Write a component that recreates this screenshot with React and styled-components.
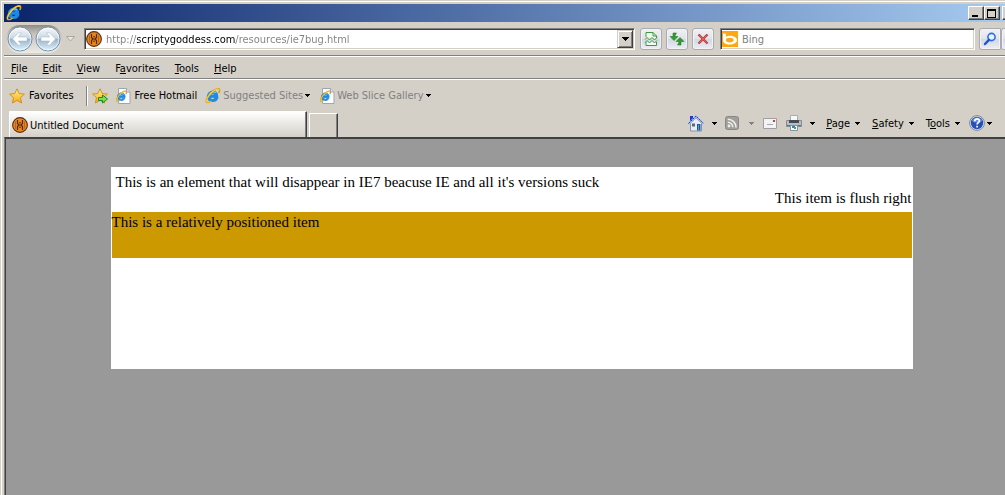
import React from 'react'
import styled, { createGlobalStyle } from 'styled-components'

const GlobalStyle = createGlobalStyle`
    * {
        box-sizing: border-box;
    }
    html, body, #root {
        height: 100%;
        margin: 0;
    }
    body {
        overflow: hidden;
        background: #d4d0c8;
    }
    button, input, a {
        font: 11px "DejaVu Sans Condensed", "Noto Sans", sans-serif;
        color: black;
    }
    button {
        border: none;
        background: none;
        padding: 0;
    }
    svg {
        display: block;
        flex: none;
    }
`;

const Window = styled.div`
    display: flex;
    flex-direction: column;
    min-height: 100%;
    padding: 2px 0 0 2px;
    border-top: 1px solid #d4d0c8;
    border-left: 1px solid #d4d0c8;
    box-shadow: inset 1px 1px white;
    background: #d4d0c8;
    font: 11px "DejaVu Sans Condensed", "Noto Sans", sans-serif;
`;

const Frame = styled.div`
    display: flex;
    flex: 1;
    flex-direction: column;
    padding: 1px 0 0 1px;
`;

const TitleBar = styled.header`
    display: flex;
    align-items: center;
    justify-content: space-between;
    height: 18px;
    padding-left: 2px;
    overflow: hidden;
    background: linear-gradient(to right, #0a246a, #a6caf0);
`;

const WindowControls = styled.div`
    display: flex;
    flex: none;
    width: 37px;
    overflow: hidden;
`;

const WindowButton = styled.button`
    display: grid;
    flex: none;
    place-items: center;
    width: 16px;
    height: 14px;
    margin-left: ${props => props.$apart ? '2px' : '0'};
    background: #d4d0c8;
    border: 1px solid;
    border-color: white #404040 #404040 white;
    box-shadow: inset -1px -1px #808080;
`;

const AddressBar = styled.form`
    display: flex;
    align-items: center;
    height: 33px;
    margin: 0;
    padding-left: 2px;
    overflow: hidden;
`;

const HistoryButtons = styled.div`
    display: flex;
    flex: none;
    gap: 2px;
    height: 28px;
    padding: 1px;
    border-radius: 14px;
    background: linear-gradient(#8d8b87, #c4c1bb 30%, #eceae6);
`;

const RoundButton = styled.button`
    width: 26px;
    height: 26px;
`;

const HistoryMenu = styled.button`
    margin: 0 9px 0 4px;
`;

const Field = styled.div`
    display: flex;
    flex: ${props => props.$wide ? '1' : 'none'};
    align-items: center;
    width: ${props => props.$wide ? 'auto' : '255px'};
    min-width: 0;
    height: 22px;
    padding-left: 1px;
    background: white;
    border: 1px solid;
    border-color: #808080 white white #808080;
    box-shadow: inset 1px 1px #404040, inset -1px -1px #d4d0c8;
`;

const TextInput = styled.input`
    flex: 1;
    min-width: 0;
    height: 18px;
    margin-left: 4px;
    padding: 2px 0 0;
    border: none;
    outline: none;
    background: transparent;
    color: #808080;
    &::placeholder {
        color: #808080;
        opacity: 1;
    }
`;

/* the domain is darker than the rest of the address */
const UrlInput = styled(TextInput)`
    background: linear-gradient(to right, #808080 31px, black 31px, black 129px, #808080 129px);
    background-clip: text;
    -webkit-background-clip: text;
    -webkit-text-fill-color: transparent;
`;

const DropButton = styled.button`
    display: grid;
    place-items: center;
    width: 16px;
    height: 18px;
    margin-right: 1px;
    background: #d4d0c8;
    border: 1px solid;
    border-color: #d4d0c8 #404040 #404040 #d4d0c8;
    box-shadow: inset 1px 1px white, inset -1px -1px #808080;
`;

const ToolButtons = styled.div`
    display: flex;
    gap: 4px;
    margin: 0 6px 0 5px;
`;

const ToolButton = styled.button`
    display: grid;
    flex: none;
    place-items: center;
    width: 22px;
    height: 22px;
    border: 1px solid #a9abb3;
    border-radius: ${props => props.$joined ? '3px 0 0 3px' : '3px'};
    background: linear-gradient(#f1f1f3, #e2e3e9 50%, #d3d7e4 51%, #eceef5);
    box-shadow: inset 0 0 0 1px #f3f3f6;
`;

const SearchButtons = styled.div`
    display: flex;
    flex: none;
    width: 26px;
    margin-left: 4px;
    overflow: hidden;
`;

const MenuBar = styled.nav`
    display: flex;
    align-items: center;
    height: 25px;
    gap: 15px;
    padding: 2px 0 0 7px;
    border-top: 1px solid #808080;
    border-bottom: 1px solid white;
    box-shadow: inset 0 1px white, inset 0 -1px #808080;
`;

const FavoritesBar = styled.nav`
    display: flex;
    align-items: center;
    height: 31px;
    padding-left: 5px;
`;

const Item = styled.button`
    display: flex;
    align-items: center;
    gap: ${props => props.$gap || 4}px;
    margin-right: ${props => props.$after || 0}px;
    white-space: nowrap;
`;

const Favorite = styled.a`
    display: flex;
    align-items: center;
    gap: 4px;
    margin-right: 8px;
    white-space: nowrap;
    text-decoration: none;
`;

const Faded = styled.span`
    color: #808080;
`;

const Separator = styled.div`
    width: 2px;
    height: 20px;
    margin-right: 4px;
    border-left: 1px solid #808080;
    border-right: 1px solid white;
`;

const TabRow = styled.div`
    display: flex;
    align-items: flex-end;
    height: 26px;
    padding-left: 5px;
`;

const Tab = styled.button`
    display: flex;
    align-items: center;
    gap: 2px;
    width: 298px;
    height: 26px;
    padding: 1px 0 0 2px;
    border-top: 1px solid white;
    border-left: 1px solid white;
    border-right: 1px solid #404040;
    box-shadow: inset -1px 0 #808080;
    background: linear-gradient(white, #f6f5f3 20%, #d4d0c8);
`;

const NewTab = styled.button`
    width: 29px;
    height: 24px;
    margin-left: 2px;
    border-top: 1px solid white;
    border-left: 1px solid white;
    border-right: 1px solid #404040;
    box-shadow: inset -1px 0 #808080;
`;

const CommandBar = styled.div`
    display: flex;
    align-items: center;
    align-self: stretch;
    margin: 0 13px 2px auto;
`;

const Viewport = styled.main`
    flex: 1;
    padding: 29px 0 0 13px;
    border-top: 1px solid #404040;
    border-left: 1px solid #808080;
    box-shadow: inset 1px 1px #404040;
    background: #999;
    font: 15px/18px "Liberation Serif", serif;
`;

const Sheet = styled.div`
    max-width: 802px;
    min-height: 202px;
    margin: 0 auto;
    padding: 7px 1px 1px;
    background: white;
    p {
        margin: 0;
    }
`;

const Intro = styled.p`
    padding-left: 4px;
    line-height: 16px;
`;

const FlushRight = styled.p`
    text-align: right;
    line-height: 16px;
`;

const Banner = styled.div`
    height: 46px;
    margin-top: 6px;
    padding-top: 1px;
    background: #c90;
`;

const Arrow = ({ color = 'black' }) => (
    <svg width="5" height="3" viewBox="0 0 5 3" shapeRendering="crispEdges">
        <path d="M0 0h5v1H4v1H3v1H2V2H1V1H0z" fill={color} />
    </svg>
)

const ELogo = () => (
    <g>
        <path d="M12.8 9.2H5.1c.3 2.8 3.7 3.1 4.8 1.1h2.7c-1.6 4.4-9.9 4.6-10.2-1.6C2.3 1.6 13.5.9 12.8 9.2zM5.2 7.1H10C9.7 4.6 5.7 4.5 5.2 7.1z" fill="#1d8be6" stroke="#1d8be6" strokeWidth="1.2" />
        <path d="M4 6.500C5.500 3.600 9 3.200 11 4.800" fill="none" stroke="#72d0fb" strokeWidth="1.100" />
        <path d="M2.200 14.600C-.500 13 4 5 9.500 2c3-1.600 5-1.700 5.100.100.100.800-.200 1.800-.900 2.900" fill="none" stroke="#d99a10" strokeWidth="1.600" />
        <path d="M2 14.200C.200 12.600 4.600 5.200 9.700 2.200c2.800-1.500 4.200-1.500 4.300 0" fill="none" stroke="#ffcf35" strokeWidth="1.100" />
        <path d="M2 14.600c1.400.500 3.100-.400 4.600-1.600" fill="none" stroke="#f3b21b" strokeWidth="1.200" />
    </g>
)

const IeIcon = () => (
    <svg width="16" height="16" viewBox="0 0 16 16"><ELogo /></svg>
)

const IePageIcon = () => (
    <svg width="15" height="16" viewBox="0 0 15 16">
        <path d="M2.500.500h8l3.500 3.500v11.500H2.500z" fill="#fbfcfe" stroke="#a0a5ad" />
        <path d="M10.500.500V4H14" fill="#dfe3ea" stroke="#a0a5ad" />
        <g transform="translate(-.4 2.600) scale(.74)"><ELogo /></g>
    </svg>
)

const SiteIcon = () => (
    <svg width="16" height="16" viewBox="0 0 16 16">
        <circle cx="8" cy="8" r="7.400" fill="#ea8420" stroke="#5b3110" strokeWidth="1.100" />
        <path d="M5.500 3v3.500L7 8 5.500 9.500V13M10.500 3v3.500L9 8l1.500 1.500V13M6.500 8h3M8 5v1.500M8 9.500V11" fill="none" stroke="#4f2b10" strokeWidth="1.200" />
        <path d="M3.500 4.500v7M12.500 4.500v7" stroke="#b85c10" strokeWidth=".8" />
    </svg>
)

const RoundIcon = ({ flip }) => (
    <svg width="26" height="26" viewBox="0 0 26 26">
        <defs>
            <linearGradient id="ball" x1="0" y1="0" x2="0" y2="1">
                <stop offset="0" stopColor="#f8fafc" />
                <stop offset=".45" stopColor="#cdd9e4" />
                <stop offset=".52" stopColor="#9fb4c9" />
                <stop offset="1" stopColor="#dcf5ff" />
            </linearGradient>
        </defs>
        <circle cx="13" cy="13" r="12" fill="url(#ball)" stroke="#7790a8" />
        <circle cx="13" cy="13" r="10.900" fill="none" stroke="white" strokeOpacity=".7" />
        <path
            d="M5.500 13l6-6.200h3L11.300 11H20v4h-8.700l3.200 4.200h-3z"
            transform={flip ? 'matrix(-1 0 0 1 26 0)' : undefined}
            fill="white" stroke="#9db3c7" strokeWidth=".5"
        />
    </svg>
)

const StarIcon = ({ add }) => (
    <svg width="16" height="16" viewBox="0 0 16 16">
        <defs>
            <linearGradient id="gold" x1="0" y1="0" x2="0" y2="1">
                <stop offset="0" stopColor="#fff08a" />
                <stop offset="1" stopColor="#f9ab12" />
            </linearGradient>
        </defs>
        <path d="M8 .8l2.200 4.700 5.200.600-3.900 3.600 1.100 5.300L8 12.400 3.400 15l1.100-5.300L.600 6.100l5.200-.600z" fill="url(#gold)" stroke="#d08a1c" strokeWidth=".9" strokeLinejoin="round" />
        {add && <path d="M6.500 9.500h4V7l5 4-5 4v-2.500h-4z" fill="#7be04e" stroke="#168a1b" />}
    </svg>
)

const CompatIcon = () => (
    <svg width="14" height="16" viewBox="0 0 14 16">
        <path d="M2 6V1.500h7L12.500 5v2M2 11v3.500h10.500V11" fill="#f4fbf2" stroke="#3b9a3c" />
        <path d="M9 1.500V5h3.500" fill="none" stroke="#3b9a3c" />
        <path d="M1 8.500l2-2 2.500 2.500L8 6.500 10.500 9 13 6.500M1 11.500l2-2 2.500 2.500L8 9.500l2.500 2.500L13 9.500" fill="none" stroke="#3b9a3c" />
    </svg>
)

const RefreshIcon = () => (
    <svg width="16" height="14" viewBox="0 0 16 14">
        <path d="M7.500 1H4v3.500H1L5 8.500l4-4H6.200V3.200zM8.500 13H12V9.500h3L11 5.500l-4 4h2.800v1.300z" fill="#2f9e2d" stroke="#187018" strokeWidth=".5" />
    </svg>
)

const StopIcon = () => (
    <svg width="12" height="12" viewBox="0 0 12 12">
        <path d="M1.500 1.500l9 9M10.500 1.500l-9 9" stroke="#b23434" strokeWidth="2.400" />
        <path d="M1.800 1.800l8.400 8.400M10.200 1.800l-8.400 8.400" stroke="#e0605c" strokeWidth="1.200" />
    </svg>
)

const BingIcon = () => (
    <svg width="16" height="16" viewBox="0 0 16 16">
        <path d="M0 0h16v16H0z" fill="#ffa613" />
        <path d="M1 2.500h2.800v3.200C8 3.600 15 5.300 15 9s-5.500 5.300-10 4.200C2.500 12.600 1 11.500 1 9.500zm2.800 6.600c0 3.200 7.900 3.100 7.900 0S3.800 5.900 3.800 9.100z" fill="white" />
    </svg>
)

const SearchIcon = () => (
    <svg width="14" height="14" viewBox="0 0 14 14">
        <circle cx="8.500" cy="5" r="3.600" fill="#eaf4ff" stroke="#2c6ee8" strokeWidth="1.600" />
        <path d="M6 7.800L2 12" stroke="#1d55d0" strokeWidth="2.500" strokeLinecap="round" />
    </svg>
)

const HomeIcon = () => (
    <svg width="16" height="17" viewBox="0 0 16 17">
        <path d="M2.500 8L8 3l5.500 5v8h-11z" fill="#e8edf4" stroke="#8093ac" />
        <path d="M2 1h3v4L2 7z" fill="#1b36d1" />
        <path d="M.500 9L8 1.500 15.500 9" fill="none" stroke="#a9b9e4" strokeWidth="2" />
        <path d="M.500 8.500L8 1l7.500 7.500" fill="none" stroke="#2945bd" strokeDasharray="2 1" />
        <path d="M9 9h3.500v6.500H9z" fill="#245797" />
        <path d="M4 8.500h3v3H4z" fill="#56697e" />
        <path d="M10.500 10v5" stroke="#5c9bd4" />
    </svg>
)

const FeedIcon = () => (
    <svg width="14" height="14" viewBox="0 0 14 14">
        <rect x=".5" y=".5" width="13" height="13" rx="2" fill="#a19f9b" stroke="#8a8884" />
        <circle cx="4" cy="10" r="1.400" fill="#f1f0ee" />
        <path d="M2.800 6.300a5 5 0 0 1 5 5M2.800 3.200a8.200 8.200 0 0 1 8.200 8.200" fill="none" stroke="#f1f0ee" strokeWidth="1.500" />
    </svg>
)

const MailIcon = () => (
    <svg width="14" height="11" viewBox="0 0 14 11">
        <path d="M.500.500h13v10H.500z" fill="#f4f3f4" stroke="#a09fa4" />
        <path d="M10 2h2v2h-2z" fill="#e3343a" />
        <path d="M4 6.500h6" stroke="#aaa9ae" />
    </svg>
)

const PrintIcon = () => (
    <svg width="16" height="16" viewBox="0 0 16 16">
        <path d="M4.500.500h7V6h-7z" fill="#f7f8f9" stroke="#a8adb2" />
        <path d="M.500 5.500h15v6H.500z" fill="#b9bec2" stroke="#858b90" />
        <path d="M3 5h10v3H3z" fill="#464d52" />
        <path d="M1 10h14v1H1z" fill="#6a7278" />
        <path d="M4.500 10.500h7v5h-7z" fill="white" stroke="#87929a" />
        <path d="M6 11h3v2H6z" fill="#2c89c8" />
        <path d="M8 12h2v2H8z" fill="#41a078" />
    </svg>
)

const HelpIcon = () => (
    <svg width="16" height="16" viewBox="0 0 16 16">
        <circle cx="8" cy="8" r="7.400" fill="#e1e5ee" stroke="#818793" />
        <circle cx="8" cy="8" r="6.200" fill="#2450b8" />
        <path d="M3 6a5.300 5.300 0 0 1 10 0c-3 2-7 2-10 0z" fill="#6c8fe0" />
        <path d="M5.700 6.200c0-3.200 4.800-3 4.700-.200C10.300 7.700 8.100 7.700 8.100 9.500M8.100 10.800v1.700" fill="none" stroke="white" strokeWidth="1.700" />
    </svg>
)

const menus = [
    ['', 'F', 'ile'],
    ['', 'E', 'dit'],
    ['', 'V', 'iew'],
    ['F', 'a', 'vorites'],
    ['', 'T', 'ools'],
    ['', 'H', 'elp']
]

const commands = [
    { key: ['', 'P', 'age'], after: 12 },
    { key: ['', 'S', 'afety'], after: 12 },
    { key: ['T', 'o', 'ols'], after: 9 }
]

const AccessLabel = ({ parts }) => (
    <span>{parts[0]}<u>{parts[1]}</u>{parts[2]}</span>
)

const Browser = () => (
    <Window>
        <GlobalStyle />
        <Frame>
            <TitleBar>
                <IeIcon />
                <WindowControls>
                    <WindowButton aria-label="Minimize">
                        <svg width="10" height="9"><path d="M1 6h6v2H1z" /></svg>
                    </WindowButton>
                    <WindowButton aria-label="Maximize">
                        <svg width="10" height="9" shapeRendering="crispEdges"><path d="M0 0h9v9H0zM1 2v6h7V2z" fillRule="evenodd" /></svg>
                    </WindowButton>
                    <WindowButton aria-label="Close" $apart />
                </WindowControls>
            </TitleBar>
            <AddressBar onSubmit={e => e.preventDefault()}>
                <HistoryButtons>
                    <RoundButton type="button" aria-label="Back"><RoundIcon /></RoundButton>
                    <RoundButton type="button" aria-label="Forward"><RoundIcon flip /></RoundButton>
                </HistoryButtons>
                <HistoryMenu type="button" aria-label="Recent pages">
                    <svg width="9" height="6"><path d="M.500.500h8L4.500 5z" fill="#e8e6e2" stroke="#aaa7a0" /></svg>
                </HistoryMenu>
                <Field $wide>
                    <SiteIcon />
                    <UrlInput aria-label="Address" defaultValue="http://scriptygoddess.com/resources/ie7bug.html" />
                    <DropButton type="button" aria-label="Show addresses">
                        <svg width="7" height="4" shapeRendering="crispEdges"><path d="M0 0h7v1H6v1H5v1H4v1H3V3H2V2H1V1H0z" /></svg>
                    </DropButton>
                </Field>
                <ToolButtons>
                    <ToolButton type="button" aria-label="Compatibility view"><CompatIcon /></ToolButton>
                    <ToolButton type="button" aria-label="Refresh"><RefreshIcon /></ToolButton>
                    <ToolButton type="button" aria-label="Stop"><StopIcon /></ToolButton>
                </ToolButtons>
                <Field>
                    <BingIcon />
                    <TextInput aria-label="Search" placeholder="Bing" />
                </Field>
                <SearchButtons>
                    <ToolButton aria-label="Search" $joined><SearchIcon /></ToolButton>
                    <ToolButton type="button" aria-label="Search options" $joined><Arrow color="#2c6ee8" /></ToolButton>
                </SearchButtons>
            </AddressBar>
            <MenuBar>
                {menus.map((parts, i) => {
                    return <Item key={i}><AccessLabel parts={parts} /></Item>
                })}
            </MenuBar>
            <FavoritesBar>
                <Item $after={12}><StarIcon />Favorites</Item>
                <Separator />
                <Item $after={8} aria-label="Add to Favorites Bar"><StarIcon add /></Item>
                <Favorite href="#hotmail"><IePageIcon />Free Hotmail</Favorite>
                <Item $gap={2} $after={10}><IeIcon /><Faded>Suggested Sites</Faded><Arrow /></Item>
                <Item $gap={2}><IePageIcon /><Faded>Web Slice Gallery</Faded><Arrow /></Item>
            </FavoritesBar>
            <TabRow>
                <Tab><SiteIcon />Untitled Document</Tab>
                <NewTab aria-label="New tab" />
                <CommandBar>
                    <Item $gap={8} $after={8} aria-label="Home"><HomeIcon /><Arrow /></Item>
                    <Item $gap={10} $after={9} aria-label="Feeds"><FeedIcon /><Arrow color="#808080" /></Item>
                    <Item $after={9} aria-label="Read mail"><MailIcon /></Item>
                    <Item $gap={8} $after={11} aria-label="Print"><PrintIcon /><Arrow /></Item>
                    {commands.map((command, i) => {
                        return <Item key={i} $gap={5} $after={command.after}><AccessLabel parts={command.key} /><Arrow /></Item>
                    })}
                    <Item $gap={2} aria-label="Help"><HelpIcon /><Arrow /></Item>
                </CommandBar>
            </TabRow>
            <Viewport>
                <Sheet>
                    <Intro>This is an element that will disappear in IE7 beacuse IE and all it's versions suck</Intro>
                    <FlushRight>This item is flush right</FlushRight>
                    <Banner>
                        <p>This is a relatively positioned item</p>
                    </Banner>
                </Sheet>
            </Viewport>
        </Frame>
    </Window>
)

export default Browser;
